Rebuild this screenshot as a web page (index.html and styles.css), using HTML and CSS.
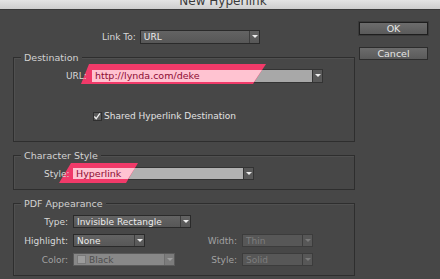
FILE: index.html
```html
<!DOCTYPE html>
<html>
<head>
    <meta charset="utf-8" />
    <title>New Hyperlink</title>
    <link rel="stylesheet" href="styles.css">
</head>
<body>
    <div class="titlebar"><span>New Hyperlink</span></div>

    <div class="dialog">
        <div class="main">
            <div class="row link-row">
                <span class="label">Link To:</span>
                <div class="select w-link"><span class="value">URL</span><span class="arrow"></span></div>
            </div>

            <div class="group dest">
                <div class="group-title">Destination</div>
                <div class="row url-row">
                    <span class="label">URL:</span>
                    <div class="field url-field">
                        <svg class="mark" width="1" height="1">
                            <polygon points="-2,-5 175,-5 162,15 -10,15" fill="#f13a69" />
                            <polygon points="1,1 171,1 163,13 1,13" fill="#ffc3d1" />
                        </svg>
                        <span class="value">http://lynda.com/deke</span>
                        <span class="arrow"></span>
                    </div>
                </div>
                <div class="check-row">
                    <span class="checkbox">
                        <svg width="9" height="9" viewBox="0 0 9 9"><path d="M1.5 4.5 L3.6 7 L7.8 1" fill="none" stroke="#eeeeee" stroke-width="1.4" /></svg>
                    </span>
                    <span>Shared Hyperlink Destination</span>
                </div>
            </div>

            <div class="group charstyle">
                <div class="group-title">Character Style</div>
                <div class="row style-row">
                    <span class="label">Style:</span>
                    <div class="field style-field">
                        <svg class="mark" width="1" height="1">
                            <polygon points="-1,-4 66,-4 54,16 -13,16" fill="#f13a69" />
                            <polygon points="1,1 63,1 56,12 1,12" fill="#ffc3d1" />
                        </svg>
                        <span class="value">Hyperlink</span>
                        <span class="arrow"></span>
                    </div>
                </div>
            </div>

            <div class="group pdf">
                <div class="group-title">PDF Appearance</div>
                <div class="pdf-grid">
                    <span class="label">Type:</span>
                    <div class="select w-type"><span class="value">Invisible Rectangle</span><span class="arrow"></span></div>
                    <span></span><span></span>

                    <span class="label">Highlight:</span>
                    <div class="select w-highlight"><span class="value">None</span><span class="arrow"></span></div>
                    <span class="label dim">Width:</span>
                    <div class="select disabled w-small"><span class="value">Thin</span><span class="arrow"></span></div>

                    <span class="label dim">Color:</span>
                    <div class="select light w-color"><span class="swatch"></span><span class="value">Black</span><span class="arrow"></span></div>
                    <span class="label dim">Style:</span>
                    <div class="select disabled w-small"><span class="value">Solid</span><span class="arrow"></span></div>
                </div>
            </div>
        </div>

        <div class="buttons">
            <div class="btn default">OK</div>
            <div class="btn">Cancel</div>
        </div>
    </div>
</body>
</html>
```

FILE: styles.css
```css
/* 对话框基础 */
html, body {
    margin: 0;
    background-color: #474747;
}

body {
    width: 440px;
    height: 279px;
    overflow: hidden;
    font-family: "DejaVu Sans", sans-serif;
    font-size: 9px;
    color: #d8d8d8;
}

.titlebar {
    height: 9px;
    overflow: hidden;
    background: linear-gradient(#e4e4e4, #cdcdcd);
    border-bottom: 1px solid #3a3a3a;
    text-align: center;
}

.titlebar span {
    display: block;
    margin-top: -6px;
    padding-left: 6px;
    line-height: 14px;
    font-size: 12px;
    color: #3a3a3a;
}

.dialog {
    display: flex;
    gap: 4px;
    padding-left: 13px;
}

.main {
    width: 342px;
}

/* 行与标签 */
.row {
    display: flex;
    align-items: center;
    gap: 4px;
}

.label {
    position: relative;
    z-index: 2;
    text-align: right;
    white-space: nowrap;
}

.label.dim {
    color: #a2a2a2;
}

.link-row {
    margin-top: 20px;
    padding-left: 89px;
}

/* 下拉框 */
.select {
    display: flex;
    align-items: center;
    height: 13px;
    box-sizing: border-box;
    border: 1px solid #2a2a2a;
    background: linear-gradient(#636363, #575757);
    color: #ececec;
}

.select .value {
    flex: 1;
    padding-left: 3px;
    white-space: nowrap;
    overflow: hidden;
}

.arrow {
    width: 9px;
    height: 100%;
    border-left: 1px solid #3d3d3d;
    position: relative;
}

.arrow::after {
    content: "";
    position: absolute;
    left: 2px;
    top: 4px;
    border-left: 3px solid transparent;
    border-right: 3px solid transparent;
    border-top: 3px solid #eeeeee;
}

.w-link { width: 120px; height: 14px; }
.w-type { width: 118px; }
.w-highlight { width: 72px; }
.w-color { width: 102px; }
.w-small { width: 71px; }

.select.light {
    background: #888888;
    border-color: #5a5a5a;
    color: #4e4e4e;
}

.select.light .arrow {
    border-left-color: #6e6e6e;
    background: #7c7c7c;
}

.select.light .arrow::after {
    border-top-color: #a0a0a0;
}

.swatch {
    width: 9px;
    height: 9px;
    box-sizing: border-box;
    margin-left: 3px;
    background: #9c9c9c;
    border: 1px solid #7a7a7a;
}

.select.disabled {
    background: #575757;
    border-color: #3c3c3c;
    color: #7e7e7e;
}

.select.disabled .arrow::after {
    border-top-color: #7a7a7a;
}

/* 分组框 */
.group {
    border: 1px solid #2e2e2e;
    box-shadow: inset 1px 1px 0 #505050;
}

.group-title {
    display: table;
    margin: -6px 0 0 7px;
    padding: 0 3px;
    line-height: 11px;
    font-size: 9.5px;
    background-color: #474747;
    color: #d2d2d2;
}

.dest {
    margin-top: 13px;
    padding-bottom: 19px;
}

.charstyle {
    margin-top: 13px;
    padding-bottom: 9px;
}

.pdf {
    margin-top: 13px;
    padding-bottom: 9px;
}

/* 文本框 */
.field {
    position: relative;
    display: flex;
    height: 14px;
    box-sizing: border-box;
    border: 1px solid #333333;
    background: #a8a8a8;
    color: #8d0c33;
}

.field .value {
    flex: 1;
    position: relative;
    padding-left: 3px;
    line-height: 12px;
    font-size: 9.5px;
}

.field .arrow {
    background: #595959;
    border-left-color: #333333;
}

.mark {
    position: absolute;
    left: -1px;
    top: -1px;
    overflow: visible;
}

.url-row {
    margin-top: 6px;
    padding-left: 52px;
}

.url-field {
    width: 232px;
}

.style-row {
    margin-top: 6px;
    padding-left: 30px;
}

.style-row .label {
    width: 24px;
}

.style-field {
    width: 182px;
    height: 13px;
    background: #b2b2b2;
}

.check-row {
    display: flex;
    align-items: center;
    gap: 2px;
    margin-top: 27px;
    padding-left: 79px;
    height: 12px;
    color: #e2e2e2;
}

.checkbox {
    width: 9px;
    height: 9px;
    box-sizing: border-box;
    border: 1px solid #2f2f2f;
    background: #5a5a5a;
    display: flex;
}

.checkbox svg {
    margin: -1px 0 0 -1px;
}

/* PDF 外观 */
.pdf-grid {
    display: grid;
    grid-template-columns: 54px 124px 35px 71px;
    column-gap: 5px;
    row-gap: 6px;
    align-items: center;
    margin-top: 6px;
}

/* 按钮 */
.buttons {
    display: flex;
    flex-direction: column;
    gap: 12px;
    padding-top: 12px;
}

.btn {
    width: 69px;
    height: 13px;
    box-sizing: border-box;
    border: 1px solid #2c2c2c;
    background: linear-gradient(#6c6c6c, #5a5a5a);
    color: #e6e6e6;
    text-align: center;
    line-height: 11px;
    font-size: 9.5px;
}

.btn.default {
    border: 1px solid #1e1e1e;
    box-shadow: 0 0 0 1px #3a3a3a;
}
```
